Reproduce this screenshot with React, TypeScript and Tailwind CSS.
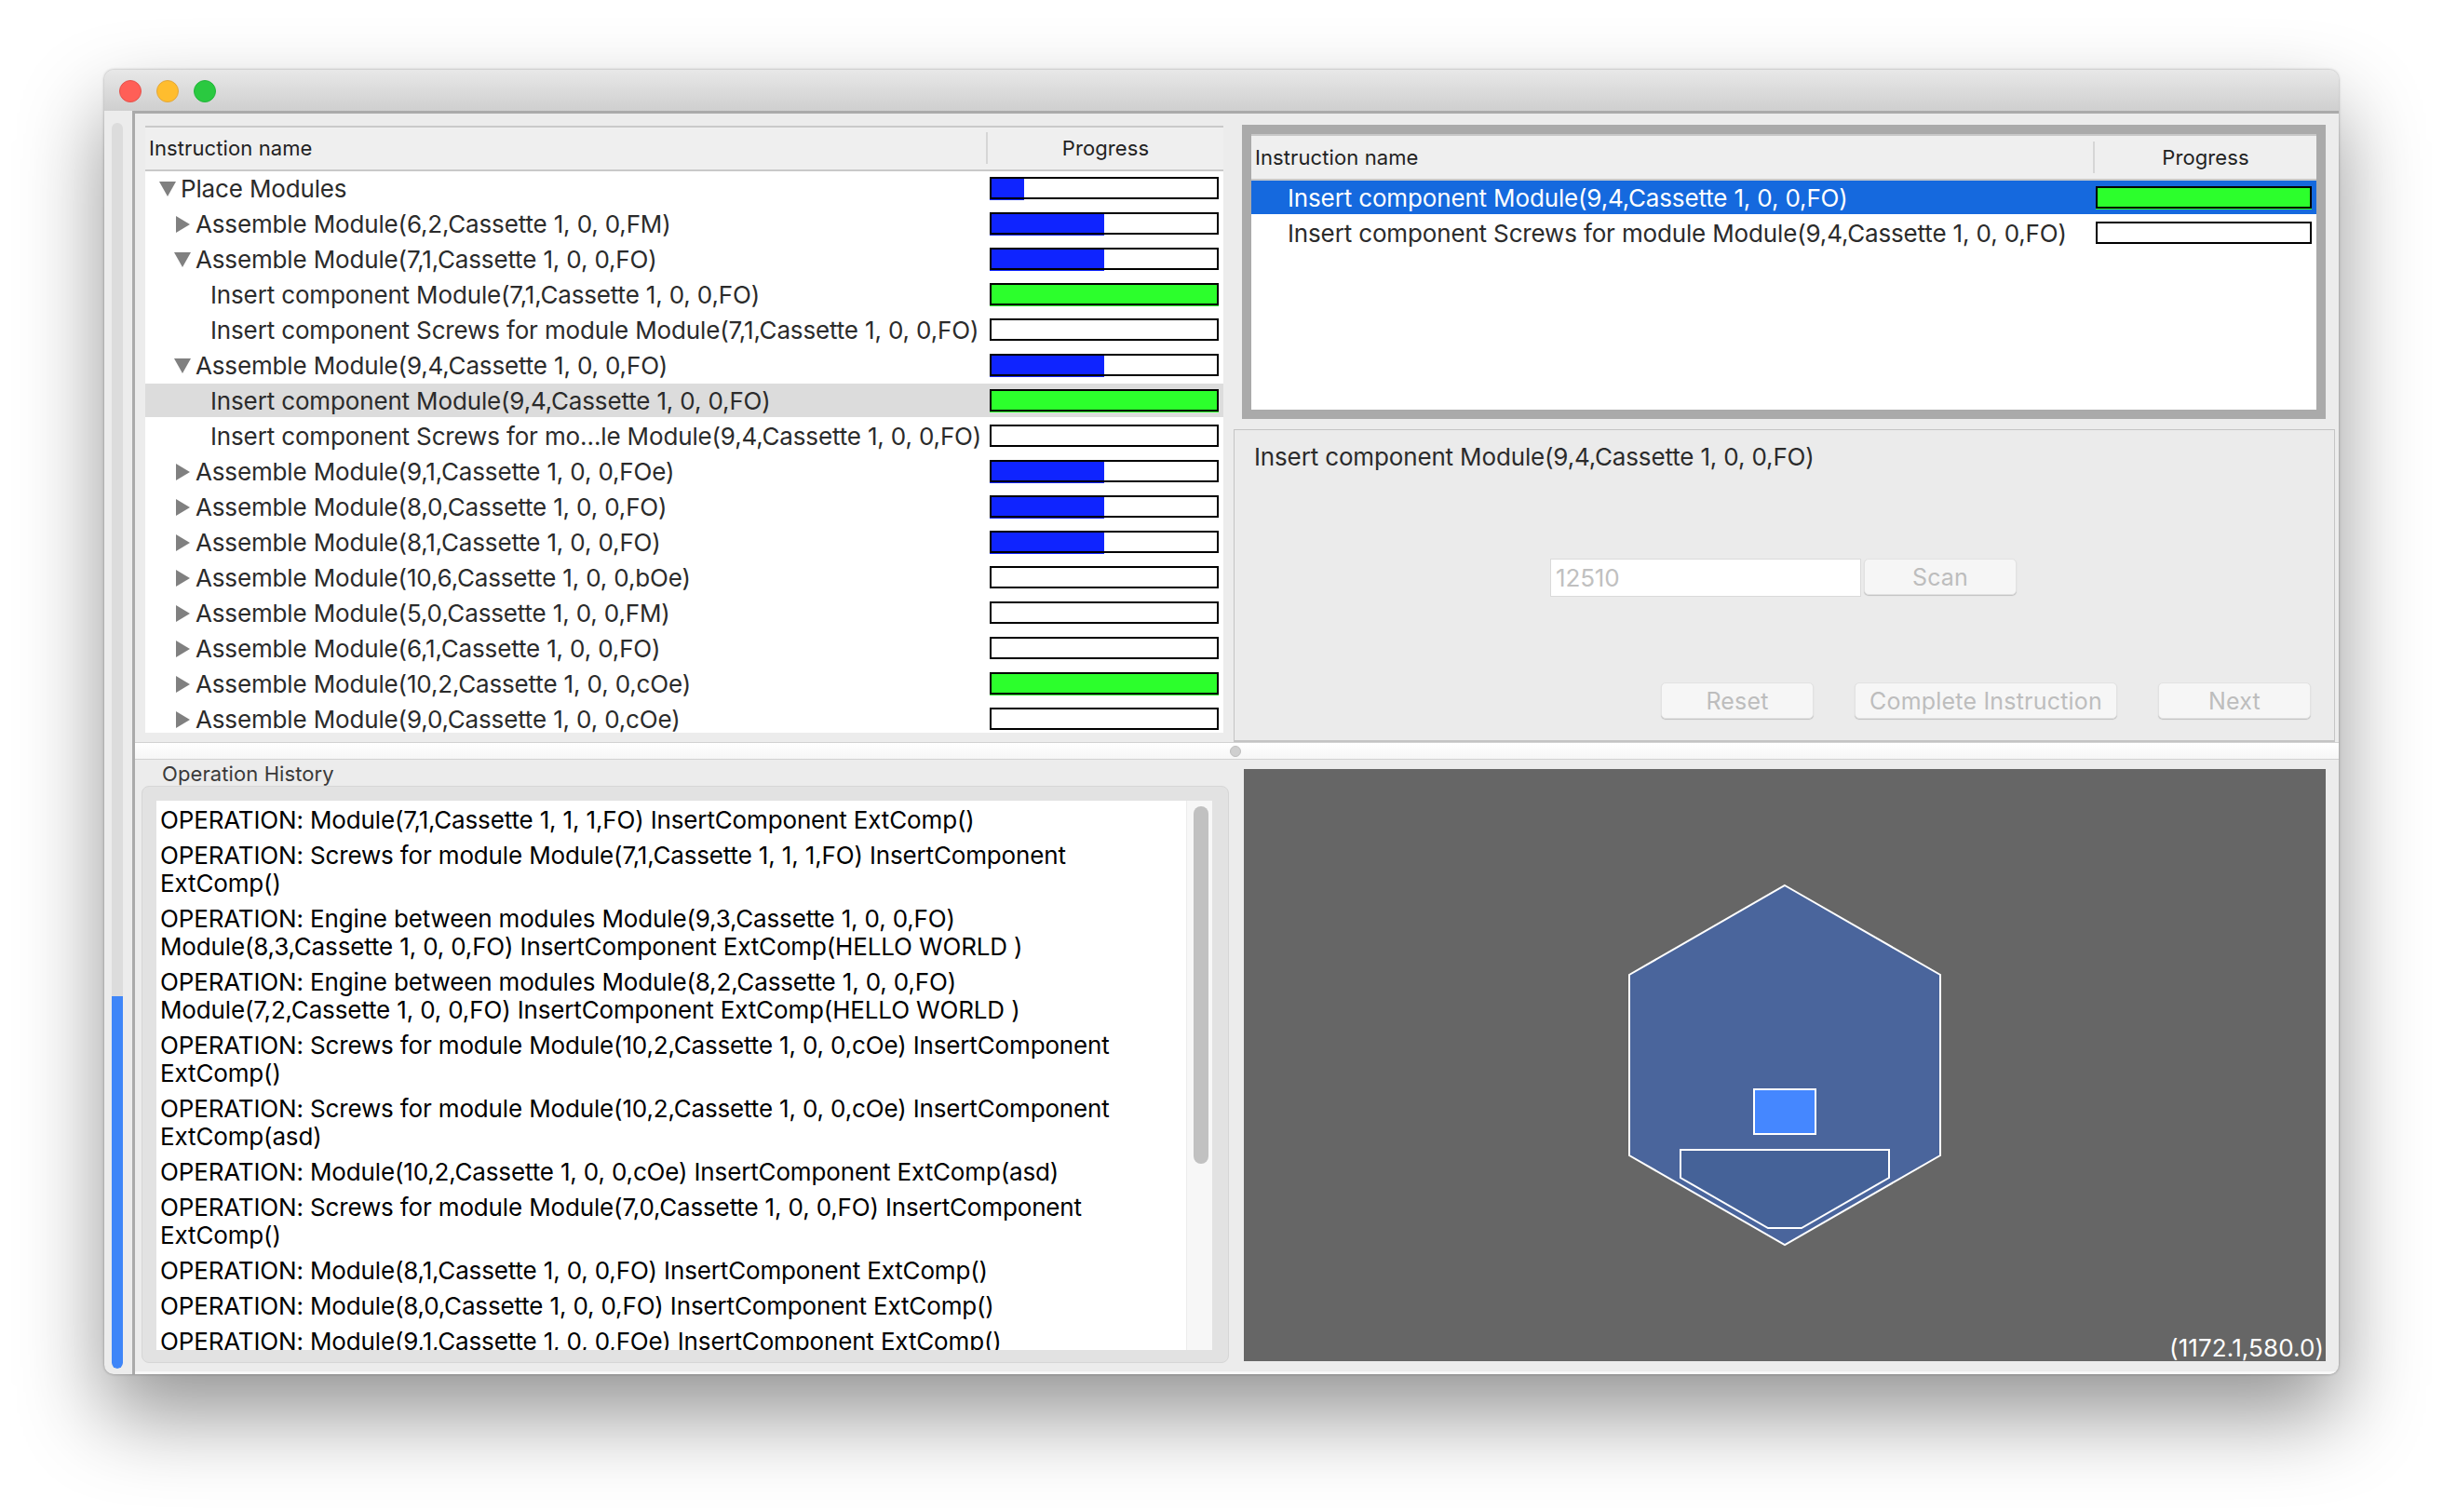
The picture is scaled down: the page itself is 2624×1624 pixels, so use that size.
const tree = [
  { name: "Place Modules", depth: 0, caret: "open", progress: 15, color: "blue" },
  { name: "Assemble Module(6,2,Cassette 1, 0, 0,FM)", depth: 1, caret: "closed", progress: 50, color: "blue" },
  { name: "Assemble Module(7,1,Cassette 1, 0, 0,FO)", depth: 1, caret: "open", progress: 50, color: "blue" },
  { name: "Insert component Module(7,1,Cassette 1, 0, 0,FO)", depth: 2, progress: 100, color: "green" },
  { name: "Insert component Screws for module Module(7,1,Cassette 1, 0, 0,FO)", depth: 2, progress: 0 },
  { name: "Assemble Module(9,4,Cassette 1, 0, 0,FO)", depth: 1, caret: "open", progress: 50, color: "blue" },
  { name: "Insert component Module(9,4,Cassette 1, 0, 0,FO)", depth: 2, progress: 100, color: "green", selected: true },
  { name: "Insert component Screws for mo…le Module(9,4,Cassette 1, 0, 0,FO)", depth: 2, progress: 0 },
  { name: "Assemble Module(9,1,Cassette 1, 0, 0,FOe)", depth: 1, caret: "closed", progress: 50, color: "blue" },
  { name: "Assemble Module(8,0,Cassette 1, 0, 0,FO)", depth: 1, caret: "closed", progress: 50, color: "blue" },
  { name: "Assemble Module(8,1,Cassette 1, 0, 0,FO)", depth: 1, caret: "closed", progress: 50, color: "blue" },
  { name: "Assemble Module(10,6,Cassette 1, 0, 0,bOe)", depth: 1, caret: "closed", progress: 0 },
  { name: "Assemble Module(5,0,Cassette 1, 0, 0,FM)", depth: 1, caret: "closed", progress: 0 },
  { name: "Assemble Module(6,1,Cassette 1, 0, 0,FO)", depth: 1, caret: "closed", progress: 0 },
  { name: "Assemble Module(10,2,Cassette 1, 0, 0,cOe)", depth: 1, caret: "closed", progress: 100, color: "green" },
  { name: "Assemble Module(9,0,Cassette 1, 0, 0,cOe)", depth: 1, caret: "closed", progress: 0 },
];

const history = [
  ["OPERATION: Module(7,1,Cassette 1, 1, 1,FO) InsertComponent ExtComp()"],
  ["OPERATION: Screws for module Module(7,1,Cassette 1, 1, 1,FO) InsertComponent", "ExtComp()"],
  ["OPERATION: Engine between modules Module(9,3,Cassette 1, 0, 0,FO)", "Module(8,3,Cassette 1, 0, 0,FO) InsertComponent ExtComp(HELLO WORLD )"],
  ["OPERATION: Engine between modules Module(8,2,Cassette 1, 0, 0,FO)", "Module(7,2,Cassette 1, 0, 0,FO) InsertComponent ExtComp(HELLO WORLD )"],
  ["OPERATION: Screws for module Module(10,2,Cassette 1, 0, 0,cOe) InsertComponent", "ExtComp()"],
  ["OPERATION: Screws for module Module(10,2,Cassette 1, 0, 0,cOe) InsertComponent", "ExtComp(asd)"],
  ["OPERATION: Module(10,2,Cassette 1, 0, 0,cOe) InsertComponent ExtComp(asd)"],
  ["OPERATION: Screws for module Module(7,0,Cassette 1, 0, 0,FO) InsertComponent", "ExtComp()"],
  ["OPERATION: Module(8,1,Cassette 1, 0, 0,FO) InsertComponent ExtComp()"],
  ["OPERATION: Module(8,0,Cassette 1, 0, 0,FO) InsertComponent ExtComp()"],
  ["OPERATION: Module(9,1,Cassette 1, 0, 0,FOe) InsertComponent ExtComp()"],
];

const indent = ["pl-[15px]", "pl-[31px]", "pl-[47px]"];

function Bar({ progress, color, width }: { progress: number; color?: string; width: string }) {
  return (
    <div className={`relative h-[25px] shrink-0 ${width}`}>
      <div
        className={`h-full ${color === "green" ? "bg-[#2cff2c]" : "bg-[#0f24ff]"}`}
        style={{ width: `${progress}%` }}
      />
      <div className={`absolute left-0 top-0 h-[24px] w-full border-2 border-black ${progress === 0 ? "bg-white" : ""}`} />
    </div>
  );
}

function Caret({ kind }: { kind?: string }) {
  return (
    <span className="flex w-[23px] shrink-0 items-center">
      {kind === "open" && (
        <svg width="18" height="16" viewBox="0 0 18 16">
          <polygon points="0,0 18,0 9,16" fill="#808080" />
        </svg>
      )}
      {kind === "closed" && (
        <svg width="18" height="18" viewBox="0 0 18 18">
          <polygon points="2,0 17,9 2,18" fill="#808080" />
        </svg>
      )}
    </span>
  );
}

function TableHeader({ nameWidth, size }: { nameWidth: string; size: string }) {
  return (
    <div className={`flex shrink-0 items-center border-y-[2px] border-y-[#c9c9c9] bg-[#efefef] pl-[4px] text-[22px] tracking-[0.1px] text-[#222] ${size}`}>
      <div className={`flex h-[34px] shrink-0 items-center border-r-[2px] border-[#d6d6d6] ${nameWidth}`}>Instruction name</div>
      <div className="flex-1 text-center">Progress</div>
    </div>
  );
}

function Button({ label, width }: { label: string; width: string }) {
  return (
    <div className={`flex h-[39px] items-center justify-center rounded-[5px] border border-[#e2e2e2] bg-[#f6f6f6] text-[25px] tracking-[0.2px] text-[#bdbdbd] shadow-[0_1px_1px_rgba(0,0,0,0.18)] ${width}`}>
      {label}
    </div>
  );
}

export default function App() {
  return (
    <div className="h-[1624px] w-[2624px] overflow-hidden bg-white pl-[112px] pt-[75px] font-['Inter',sans-serif] text-[26px] leading-[30px] tracking-[-0.15px] text-[#2b2b2b]">
      <div className="flex h-[1401px] w-[2400px] flex-col overflow-hidden rounded-[10px] bg-[#ececec] shadow-[0_44px_90px_0_rgba(0,0,0,0.42),0_0_3px_rgba(0,0,0,0.35)]">
        <div className="flex h-[44px] shrink-0 items-center gap-[16px] bg-gradient-to-b from-[#e8e8e8] to-[#cfcfcf] pl-[16px] pt-[2px]">
          <span className="h-[24px] w-[24px] rounded-full border border-[#e5524c] bg-[#ff5f57]" />
          <span className="h-[24px] w-[24px] rounded-full border border-[#e2a73b] bg-[#ffbd2e]" />
          <span className="h-[24px] w-[24px] rounded-full border border-[#22b53a] bg-[#2ac940]" />
        </div>

        <div className="flex min-h-0 flex-1">
          <div className="flex w-[30px] shrink-0 pb-[6px] pl-[8px] pr-[10px] pt-[13px]">
            <div className="flex w-[12px] flex-col justify-end overflow-hidden rounded-full bg-[#dcdcdc]">
              <div className="h-[400px] rounded-b-full bg-[#3f86f8]" />
            </div>
          </div>

          <div className="flex min-w-0 flex-1 flex-col border-l-[3px] border-t-[3px] border-[#aaaaaa]">
            <div className="flex h-[675px] shrink-0">
              <div className="flex w-[1180px] shrink-0 flex-col pb-[10px] pl-[11px] pr-[11px] pt-[13px]">
                <TableHeader nameWidth="w-[901px]" size="h-[49px] pb-[2px]" />
                <div className="min-h-0 flex-1 overflow-hidden bg-white">
                  {tree.map((row) => (
                    <div
                      key={row.name}
                      className={`mb-[2px] flex h-[36px] items-center pr-[5px] ${row.selected ? "bg-[#dcdcdc]" : ""}`}
                    >
                      <div className={`flex w-[907px] shrink-0 items-center whitespace-nowrap pt-[2px] ${indent[row.depth]}`}>
                        <Caret kind={row.caret} />
                        {row.name}
                      </div>
                      <Bar progress={row.progress} color={row.color} width="w-[246px]" />
                    </div>
                  ))}
                </div>
              </div>

              <div className="flex min-w-0 flex-1 flex-col pr-[4px] pt-[12px]">
                <div className="ml-[9px] flex h-[316px] w-[1164px] flex-col border-[10px] border-[#aaaaaa] bg-white">
                  <TableHeader nameWidth="w-[902px]" size="h-[50px]" />
                  <div className="flex h-[36px] items-center bg-[#1569de] pl-[39px] text-white">
                    <span className="w-[868px] shrink-0 pt-[2px]">Insert component Module(9,4,Cassette 1, 0, 0,FO)</span>
                    <Bar progress={100} color="green" width="w-[232px]" />
                  </div>
                  <div className="mt-[2px] flex h-[36px] items-center pl-[39px]">
                    <span className="w-[868px] shrink-0 whitespace-nowrap pt-[2px]">Insert component Screws for module Module(9,4,Cassette 1, 0, 0,FO)</span>
                    <Bar progress={0} width="w-[232px]" />
                  </div>
                </div>

                <div className="mt-[11px] flex min-h-0 flex-1 flex-col border border-b-[2px] border-[#c4c4c4] bg-[#ebebeb] pb-[23px] pr-[25px]">
                  <div className="pl-[21px] pt-[14px]">Insert component Module(9,4,Cassette 1, 0, 0,FO)</div>
                  <div className="mt-[94px] flex items-start pl-[339px]">
                    <div className="flex h-[41px] w-[334px] items-center border border-[#dadada] bg-white pl-[5px] text-[#c0c0c0]">12510</div>
                    <div className="ml-[3px]">
                      <Button label="Scan" width="w-[164px]" />
                    </div>
                  </div>
                  <div className="mt-auto flex justify-end gap-x-[44px]">
                    <Button label="Reset" width="w-[164px]" />
                    <Button label="Complete Instruction" width="w-[282px]" />
                    <Button label="Next" width="w-[164px]" />
                  </div>
                </div>
              </div>
            </div>

            <div className="flex h-[19px] shrink-0 items-center border-y border-[#d2d2d2] bg-gradient-to-b from-white to-[#f6f6f6] pl-[1176px]">
              <span className="h-[12px] w-[12px] rounded-full border border-[#bdbdbd] bg-[#cfcfcf]" />
            </div>

            <div className="flex min-h-0 flex-1 border-b-[3px] border-[#f8f8f8]">
              <div className="flex w-[1191px] shrink-0 flex-col pb-[9px] pl-[7px] pr-[16px]">
                <div className="flex h-[28px] shrink-0 items-center pl-[22px] pt-[2px] text-[22px] tracking-[0.1px] text-[#3a3a3a]">Operation History</div>
                <div className="flex min-h-0 flex-1 rounded-[8px] border border-[#d6d6d6] bg-[#e2e2e2] pb-[13px] pl-[15px] pr-[17px] pt-[15px]">
                  <div className="min-w-0 flex-1 overflow-hidden bg-white pl-[4px] pt-[2px] text-black">
                    {history.map((item) => (
                      <div key={item.join()} className="whitespace-nowrap py-[4px]">
                        {item.map((line) => (
                          <div key={line}>{line}</div>
                        ))}
                      </div>
                    ))}
                  </div>
                  <div className="w-[28px] shrink-0 border-l border-[#ececec] bg-[#f7f7f7] pl-[7px] pt-[6px]">
                    <div className="h-[384px] w-[16px] rounded-full bg-[#c1c1c1]" />
                  </div>
                </div>
              </div>

              <div className="flex flex-1 flex-col pb-[11px] pr-[14px] pt-[10px]">
                <div className="relative flex-1 bg-[#666666]">
                  <svg width="1162" height="636" viewBox="1336 826 1162 636" className="block">
                    <polygon points="1917,951 2084,1047 2084,1241 1917,1337 1750,1241 1750,1047" fill="#4a659c" stroke="#ffffff" strokeWidth="2" />
                    <rect x="1884" y="1170" width="66" height="48" fill="#4587ff" stroke="#ffffff" strokeWidth="2" />
                    <polygon points="1805,1235 2029,1235 2029,1265 1935,1319 1899,1319 1805,1265" fill="#456298" stroke="#ffffff" strokeWidth="2" />
                  </svg>
                  <span className="absolute -bottom-[1px] right-[2px] tracking-[0.1px] text-white">(1172.1,580.0)</span>
                </div>
              </div>
            </div>
          </div>
        </div>
      </div>
    </div>
  );
}
